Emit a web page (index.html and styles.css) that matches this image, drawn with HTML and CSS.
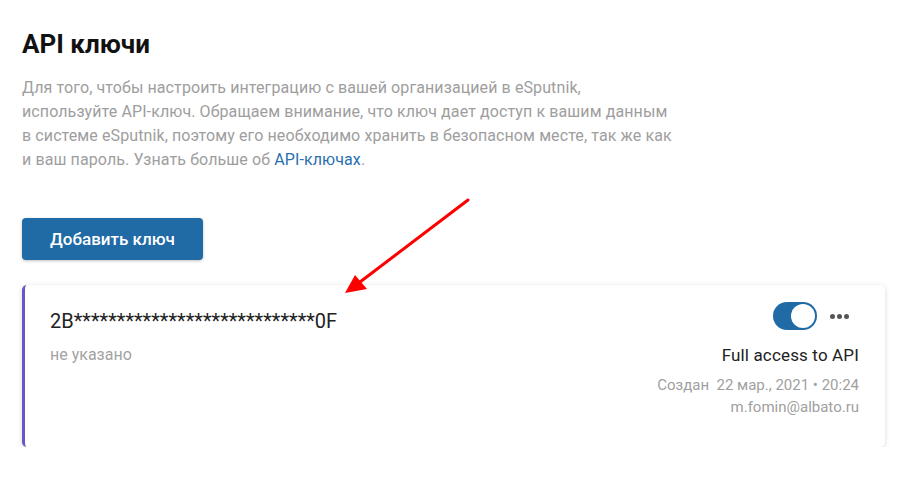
FILE: index.html
```html
<!DOCTYPE html>
<html>
  <head>
    <title>API ключи</title>
    <meta charset="utf-8" />
    <link rel="stylesheet" href="styles.css">
  </head>
  <body>
    <div class="page">
      <h1 class="title">API ключи</h1>
      <p class="intro">Для того, чтобы настроить интеграцию с вашей организацией в eSputnik,<br>используйте API-ключ. Обращаем внимание, что ключ дает доступ к вашим данным<br>в системе eSputnik, поэтому его необходимо хранить в безопасном месте, так же как<br>и ваш пароль. Узнать больше об <a href="#">API-ключах</a>.</p>
      <button class="btn">Добавить ключ</button>
      <div class="card">
        <div class="card-left">
          <div class="key">2B****************************0F</div>
          <div class="note">не указано</div>
        </div>
        <div class="card-right">
          <div class="controls">
            <span class="toggle"><span class="knob"></span></span>
            <span class="more"><i></i><i></i><i></i></span>
          </div>
          <div class="scope">Full access to API</div>
          <div class="meta first">Создан&nbsp; 22 мар., 2021 • 20:24</div>
          <div class="meta">m.fomin@albato.ru</div>
        </div>
      </div>
    </div>
    <svg class="arrow" width="907" height="481" viewBox="0 0 907 481">
      <line x1="468" y1="200" x2="360" y2="282" stroke="#ff0000" stroke-width="3" stroke-linecap="round"/>
      <polygon points="345,293 355,275 367,289" fill="#ff0000"/>
    </svg>
  </body>
</html>
```
FILE: styles.css
```css
*{
  margin:0;
  padding:0;
  box-sizing:border-box;
}
body{
  font-family:Roboto, "Liberation Sans", sans-serif;
  background:#fff;
  color:#222;
}
.page{
  padding:29px 22px 0 22px;
}
.title{
  font-size:26px;
  font-weight:700;
  color:#111;
  line-height:30px;
}
.intro{
  margin-top:17px;
  font-size:16px;
  line-height:24px;
  letter-spacing:0.1px;
  color:#9e9e9e;
  white-space:nowrap;
}
.intro a{
  color:#2a6fae;
  text-decoration:none;
}
.btn{
  margin-top:46px;
  width:181px;
  height:42px;
  border:none;
  border-radius:4px;
  background:#206ba6;
  color:#fff;
  font-family:Roboto, "Liberation Sans", sans-serif;
  font-size:17px;
  font-weight:500;
  box-shadow:0 1px 3px rgba(0,0,0,0.25);
}
.card{
  margin-top:25px;
  width:863px;
  height:162px;
  background:#fff;
  border-left:3px solid #6a55c8;
  border-radius:5px;
  box-shadow:0 1px 5px rgba(0,0,0,0.16);
  display:flex;
  justify-content:space-between;
  padding:24px 26px 0 25px;
}
.key{
  font-size:20px;
  line-height:24px;
  color:#222;
}
.note{
  margin-top:12px;
  font-size:16px;
  line-height:20px;
  color:#a3a3a3;
}
.card-right{
  display:flex;
  flex-direction:column;
  align-items:flex-end;
  margin-top:-7px;
}
.controls{
  display:flex;
  align-items:center;
  gap:13px;
  margin-right:10px;
}
.toggle{
  display:block;
  width:44px;
  height:28px;
  border-radius:14px;
  background:#206ba6;
  position:relative;
}
.knob{
  position:absolute;
  right:2px;
  top:2px;
  width:24px;
  height:24px;
  border-radius:50%;
  background:#fff;
}
.more{
  display:flex;
  gap:2px;
}
.more i{
  display:block;
  width:5px;
  height:5px;
  border-radius:50%;
  background:#555;
}
.scope{
  margin-top:13px;
  font-size:17px;
  line-height:24px;
  letter-spacing:0.15px;
  color:#222;
}
.meta{
  font-size:15px;
  line-height:22px;
  color:#a0a0a0;
}
.meta.first{
  margin-top:7px;
}
.arrow{
  position:absolute;
  left:0;
  top:0;
  pointer-events:none;
}
```
